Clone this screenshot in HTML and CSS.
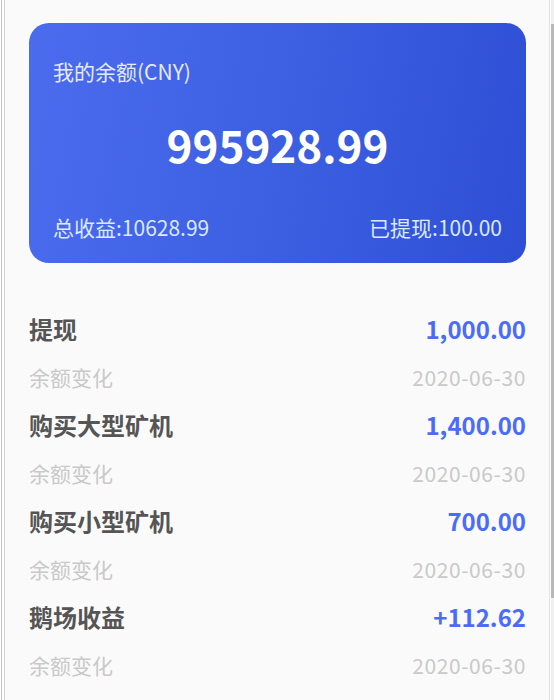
FILE: index.html
```html
<!DOCTYPE html>
<html>
<head>
    <meta charset="utf-8" />
    <title>我的余额</title>
    <link rel="stylesheet" href="styles.css">
</head>
<body>
    <section id="shell">
        <section id="screen">
            <!-- balance card -->
            <div class="card">
                <div class="card-label">我的余额(CNY)</div>
                <div class="card-total">995928.99</div>
                <div class="card-foot">
                    <span>总收益:10628.99</span>
                    <span>已提现:100.00</span>
                </div>
            </div>

            <!-- records -->
            <ul class="records">
                <li>
                    <div class="rec-top"><span class="rec-name">提现</span><span class="rec-amount">1,000.00</span></div>
                    <div class="rec-sub"><span>余额变化</span><span class="rec-date">2020-06-30</span></div>
                </li>
                <li>
                    <div class="rec-top"><span class="rec-name">购买大型矿机</span><span class="rec-amount">1,400.00</span></div>
                    <div class="rec-sub"><span>余额变化</span><span class="rec-date">2020-06-30</span></div>
                </li>
                <li>
                    <div class="rec-top"><span class="rec-name">购买小型矿机</span><span class="rec-amount">700.00</span></div>
                    <div class="rec-sub"><span>余额变化</span><span class="rec-date">2020-06-30</span></div>
                </li>
                <li>
                    <div class="rec-top"><span class="rec-name">鹅场收益</span><span class="rec-amount">+112.62</span></div>
                    <div class="rec-sub"><span>余额变化</span><span class="rec-date">2020-06-30</span></div>
                </li>
            </ul>
        </section>
        <div class="scrollbar"><div class="thumb"></div></div>
    </section>
</body>
</html>
```

FILE: styles.css
```css
*{
    padding:0;
    margin:0;
    box-sizing:border-box;
}
html, body{
    height:100%;
    background:#fff;
}
body{
    padding-left:1px;
    font-family:"Noto Sans CJK SC", "Noto Sans", sans-serif;
}
#shell{
    position:relative;
    height:700px;
    display:flex;
    border-left:1px solid #c4c4c4;
    padding-left:2px;
    padding-right:4px;
    background:#fff;
}
#screen{
    flex-grow:1;
    border-left:1px solid #d2d2d2;
    border-right:1px solid #e2e2e2;
    background:#fafafa;
    padding:23px 23px 0 24px;
    overflow:hidden;
}
.scrollbar{
    position:absolute;
    top:0;
    right:0;
    width:3px;
    height:700px;
    background:#f0f0f0;
}
.thumb{
    margin-top:24px;
    height:574px;
    background:#b8b8b8;
}
.card{
    height:240px;
    border-radius:20px;
    background:linear-gradient(100deg, #4b6ced 0%, #3d5fe2 50%, #2e4fd5 100%);
    padding:34px 24px 0 24px;
    display:flex;
    flex-direction:column;
}
.card-label{
    font-size:21px;
    line-height:28px;
    color:#e6eaff;
}
.card-total{
    margin-top:31px;
    text-align:center;
    font-size:44px;
    font-weight:bold;
    line-height:56px;
    color:#fff;
}
.card-foot{
    margin-top:41px;
    display:flex;
    justify-content:space-between;
    font-size:21px;
    line-height:28px;
    color:#dbeaff;
}
.records{
    list-style:none;
    margin-top:42px;
}
.rec-top, .rec-sub{
    display:flex;
    justify-content:space-between;
    align-items:center;
}
.rec-top{
    height:47px;
}
.rec-sub{
    height:49px;
    font-size:21px;
    color:#c9c9c9;
}
.rec-name{
    font-size:24px;
    font-weight:bold;
    color:#555;
}
.rec-amount{
    font-size:24px;
    font-weight:bold;
    color:#4a6cf6;
}
.rec-date{
    letter-spacing:0.6px;
}
```
